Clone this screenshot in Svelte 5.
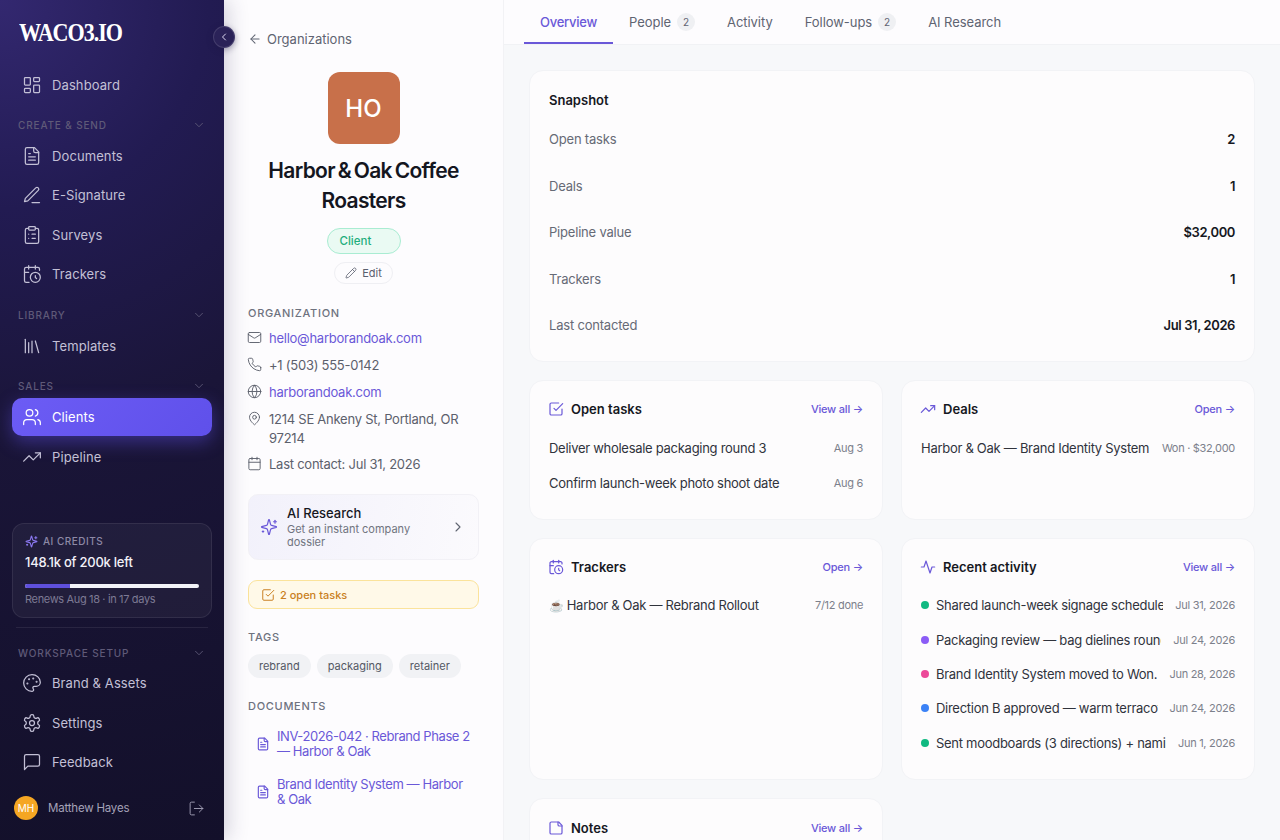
<script>
  const icons = {
    dashboard: '<rect width="7" height="9" x="3" y="3" rx="1"/><rect width="7" height="5" x="14" y="3" rx="1"/><rect width="7" height="9" x="14" y="12" rx="1"/><rect width="7" height="5" x="3" y="16" rx="1"/>',
    file: '<path d="M15 2H6a2 2 0 0 0-2 2v16a2 2 0 0 0 2 2h12a2 2 0 0 0 2-2V7Z"/><path d="M14 2v4a2 2 0 0 0 2 2h4"/><path d="M10 9H8"/><path d="M16 13H8"/><path d="M16 17H8"/>',
    pen: '<path d="M12 21h9"/><path d="M16.5 3.5a2.12 2.12 0 0 1 3 3L7 19l-4 1 1-4Z"/>',
    clipboard: '<rect width="8" height="4" x="8" y="2" rx="1"/><path d="M16 4h2a2 2 0 0 1 2 2v14a2 2 0 0 1-2 2H6a2 2 0 0 1-2-2V6a2 2 0 0 1 2-2h2"/><path d="M12 11h4"/><path d="M12 16h4"/><path d="M8 11h.01"/><path d="M8 16h.01"/>',
    calclock: '<path d="M21 7.5V6a2 2 0 0 0-2-2H5a2 2 0 0 0-2 2v14a2 2 0 0 0 2 2h3.5"/><path d="M16 2v4"/><path d="M8 2v4"/><path d="M3 10h5"/><path d="M17.5 17.5 16 16.3V14"/><circle cx="16" cy="16" r="6"/>',
    library: '<path d="m16 6 4 14"/><path d="M12 6v14"/><path d="M8 8v12"/><path d="M4 4v16"/>',
    users: '<path d="M16 21v-2a4 4 0 0 0-4-4H6a4 4 0 0 0-4 4v2"/><circle cx="9" cy="7" r="4"/><path d="M22 21v-2a4 4 0 0 0-3-3.87"/><path d="M16 3.13a4 4 0 0 1 0 7.75"/>',
    trending: '<polyline points="22 7 13.5 15.5 8.5 10.5 2 17"/><polyline points="16 7 22 7 22 13"/>',
    palette: '<path d="M12 22a1 1 0 0 1 0-20 10 9 0 0 1 10 9 5 5 0 0 1-5 5h-2.25a1.75 1.75 0 0 0-1.4 2.8l.3.4a1.75 1.75 0 0 1-1.4 2.8z"/><circle cx="13.5" cy="6.5" r=".5" fill="currentColor"/><circle cx="17.5" cy="10.5" r=".5" fill="currentColor"/><circle cx="6.5" cy="12.5" r=".5" fill="currentColor"/><circle cx="8.5" cy="7.5" r=".5" fill="currentColor"/>',
    settings: '<path d="M12.22 2h-.44a2 2 0 0 0-2 2v.18a2 2 0 0 1-1 1.73l-.43.25a2 2 0 0 1-2 0l-.15-.08a2 2 0 0 0-2.73.73l-.22.38a2 2 0 0 0 .73 2.73l.15.1a2 2 0 0 1 1 1.72v.51a2 2 0 0 1-1 1.74l-.15.09a2 2 0 0 0-.73 2.73l.22.38a2 2 0 0 0 2.73.73l.15-.08a2 2 0 0 1 2 0l.43.25a2 2 0 0 1 1 1.73V20a2 2 0 0 0 2 2h.44a2 2 0 0 0 2-2v-.18a2 2 0 0 1 1-1.73l.43-.25a2 2 0 0 1 2 0l.15.08a2 2 0 0 0 2.73-.73l.22-.39a2 2 0 0 0-.73-2.73l-.15-.08a2 2 0 0 1-1-1.74v-.5a2 2 0 0 1 1-1.74l.15-.09a2 2 0 0 0 .73-2.73l-.22-.38a2 2 0 0 0-2.73-.73l-.15.08a2 2 0 0 1-2 0l-.43-.25a2 2 0 0 1-1-1.73V4a2 2 0 0 0-2-2z"/><circle cx="12" cy="12" r="3"/>',
    message: '<path d="M21 15a2 2 0 0 1-2 2H7l-4 4V5a2 2 0 0 1 2-2h14a2 2 0 0 1 2 2z"/>',
    logout: '<path d="M9 21H5a2 2 0 0 1-2-2V5a2 2 0 0 1 2-2h4"/><polyline points="16 17 21 12 16 7"/><line x1="21" y1="12" x2="9" y2="12"/>',
    sparkles: '<path d="M9.937 15.5A2 2 0 0 0 8.5 14.063l-6.135-1.582a.5.5 0 0 1 0-.962L8.5 9.936A2 2 0 0 0 9.937 8.5l1.582-6.135a.5.5 0 0 1 .963 0L14.063 8.5A2 2 0 0 0 15.5 9.937l6.135 1.581a.5.5 0 0 1 0 .964L15.5 14.063a2 2 0 0 0-1.437 1.437l-1.582 6.135a.5.5 0 0 1-.963 0z"/><path d="M20 3v4"/><path d="M22 5h-4"/><path d="M4 17v2"/><path d="M5 18H3"/>',
    mail: '<rect width="20" height="16" x="2" y="4" rx="2"/><path d="m22 7-8.97 5.7a1.94 1.94 0 0 1-2.06 0L2 7"/>',
    phone: '<path d="M22 16.92v3a2 2 0 0 1-2.18 2 19.79 19.79 0 0 1-8.63-3.07 19.5 19.5 0 0 1-6-6 19.79 19.79 0 0 1-3.07-8.67A2 2 0 0 1 4.11 2h3a2 2 0 0 1 2 1.72 12.84 12.84 0 0 0 .7 2.81 2 2 0 0 1-.45 2.11L8.09 9.91a16 16 0 0 0 6 6l1.27-1.27a2 2 0 0 1 2.11-.45 12.84 12.84 0 0 0 2.81.7A2 2 0 0 1 22 16.92z"/>',
    globe: '<circle cx="12" cy="12" r="10"/><path d="M12 2a14.5 14.5 0 0 0 0 20 14.5 14.5 0 0 0 0-20"/><path d="M2 12h20"/>',
    pin: '<path d="M20 10c0 6-8 12-8 12s-8-6-8-12a8 8 0 0 1 16 0Z"/><circle cx="12" cy="10" r="3"/>',
    calendar: '<path d="M8 2v4"/><path d="M16 2v4"/><rect width="18" height="18" x="3" y="4" rx="2"/><path d="M3 10h18"/>',
    check: '<path d="m9 11 3 3L22 4"/><path d="M21 12v7a2 2 0 0 1-2 2H5a2 2 0 0 1-2-2V5a2 2 0 0 1 2-2h11"/>',
    pencil: '<path d="M21.174 6.812a1 1 0 0 0-3.986-3.987L3.842 16.174a2 2 0 0 0-.5.83l-1.321 4.352a.5.5 0 0 0 .623.622l4.353-1.32a2 2 0 0 0 .83-.497z"/><path d="m15 5 4 4"/>',
    activity: '<path d="M22 12h-4l-3 9L9 3l-3 9H2"/>',
    note: '<path d="M16 3H5a2 2 0 0 0-2 2v14a2 2 0 0 0 2 2h14a2 2 0 0 0 2-2V8Z"/><path d="M15 3v4a2 2 0 0 0 2 2h4"/>',
    chevdown: '<path d="m6 9 6 6 6-6"/>',
    chevleft: '<path d="m15 18-6-6 6-6"/>',
    chevright: '<path d="m9 18 6-6-6-6"/>',
    back: '<path d="m12 19-7-7 7-7"/><path d="M19 12H5"/>'
  };

  const groups = [
    { items: [{ i: 'dashboard', t: 'Dashboard' }] },
    { label: 'CREATE & SEND', items: [{ i: 'file', t: 'Documents' }, { i: 'pen', t: 'E-Signature' }, { i: 'clipboard', t: 'Surveys' }, { i: 'calclock', t: 'Trackers' }] },
    { label: 'LIBRARY', items: [{ i: 'library', t: 'Templates' }] },
    { label: 'SALES', items: [{ i: 'users', t: 'Clients', active: true }, { i: 'trending', t: 'Pipeline' }] }
  ];
  const setup = [{ i: 'palette', t: 'Brand & Assets' }, { i: 'settings', t: 'Settings' }, { i: 'message', t: 'Feedback' }];
  const contacts = [
    { i: 'mail', t: 'hello@harborandoak.com', link: true },
    { i: 'phone', t: '+1 (503) 555-0142' },
    { i: 'globe', t: 'harborandoak.com', link: true },
    { i: 'pin', t: '1214 SE Ankeny St, Portland, OR 97214' },
    { i: 'calendar', t: 'Last contact: Jul 31, 2026' }
  ];
  const tags = ['rebrand', 'packaging', 'retainer'];
  const docs = ['INV-2026-042 · Rebrand Phase 2 — Harbor & Oak', 'Brand Identity System — Harbor & Oak'];
  const tabs = [{ t: 'Overview', active: true }, { t: 'People', n: 2 }, { t: 'Activity' }, { t: 'Follow-ups', n: 2 }, { t: 'AI Research' }];
  const snapshot = [['Open tasks', '2'], ['Deals', '1'], ['Pipeline value', '$32,000'], ['Trackers', '1'], ['Last contacted', 'Jul 31, 2026']];
  const activity = [
    ['#10b981', 'Shared launch-week signage schedule with the team', 'Jul 31, 2026'],
    ['#8b5cf6', 'Packaging review — bag dielines round 2 sent over', 'Jul 24, 2026'],
    ['#ec4899', 'Brand Identity System moved to Won.', 'Jun 28, 2026'],
    ['#3b82f6', 'Direction B approved — warm terracotta palette', 'Jun 24, 2026'],
    ['#10b981', 'Sent moodboards (3 directions) + naming shortlist', 'Jun 1, 2026']
  ];
</script>

{#snippet icon(name, cls)}
  <svg class={cls} viewBox="0 0 24 24" fill="none" stroke="currentColor" stroke-linecap="round" stroke-linejoin="round">{@html icons[name]}</svg>
{/snippet}

{#snippet navItem(it)}
  <a class="nav-item" class:active={it.active} href="#top">
    {@render icon(it.i, 'nav-ic')}
    <span>{it.t}</span>
  </a>
{/snippet}

{#snippet cardHead(ic, title, action)}
  <div class="card-head">
    <h3>{@render icon(ic, 'head-ic')}{title}</h3>
    <a href="#top" class="action">{action} →</a>
  </div>
{/snippet}

<div class="app">
  <aside class="sidebar">
    <div class="logo"><span>WACO3.IO</span></div>
    <button class="collapse" aria-label="Collapse sidebar">{@render icon('chevleft', 'collapse-ic')}</button>
    <nav class="nav">
      {#each groups as g}
        <div class="group">
          {#if g.label}
            <div class="group-label"><span>{g.label}</span>{@render icon('chevdown', 'group-ic')}</div>
          {/if}
          {#each g.items as it}{@render navItem(it)}{/each}
        </div>
      {/each}
    </nav>
    <div class="credits">
      <div class="credits-label">{@render icon('sparkles', 'credits-ic')}AI CREDITS</div>
      <div class="credits-value">148.1k of 200k left</div>
      <div class="bar"><div class="bar-fill" style="width: 26%"></div></div>
      <div class="credits-note">Renews Aug 18 · in 17 days</div>
    </div>
    <div class="sep"></div>
    <div class="group setup">
      <div class="group-label"><span>WORKSPACE SETUP</span>{@render icon('chevdown', 'group-ic')}</div>
      {#each setup as it}{@render navItem(it)}{/each}
    </div>
    <div class="user">
      <div class="user-av">MH</div>
      <span class="user-name">Matthew Hayes</span>
      {@render icon('logout', 'logout-ic')}
    </div>
  </aside>

  <section class="org">
    <a class="back" href="#top">{@render icon('back', 'back-ic')}Organizations</a>
    <div class="org-top">
      <div class="org-av">HO</div>
      <h1>Harbor &amp; Oak Coffee Roasters</h1>
      <span class="chip">Client</span>
      <button class="edit">{@render icon('pencil', 'edit-ic')}Edit</button>
    </div>

    <h4 class="org-label first">ORGANIZATION</h4>
    <div class="contacts">
      {#each contacts as c}
        <div class="contact">
          {@render icon(c.i, 'contact-ic')}
          <span class:link={c.link}>{c.t}</span>
        </div>
      {/each}
    </div>

    <div class="research">
      {@render icon('sparkles', 'research-ic')}
      <div class="research-body">
        <strong>AI Research</strong>
        <span>Get an instant company dossier</span>
      </div>
      {@render icon('chevright', 'research-chev')}
    </div>

    <div class="tasks-pill">{@render icon('check', 'pill-ic')}2 open tasks</div>

    <h4 class="org-label">TAGS</h4>
    <div class="tags">
      {#each tags as t}<span class="tag">{t}</span>{/each}
    </div>

    <h4 class="org-label">DOCUMENTS</h4>
    <div class="docs">
      {#each docs as d}
        <a class="doc" href="#top">{@render icon('file', 'doc-ic')}<span>{d}</span></a>
      {/each}
    </div>
  </section>

  <main class="main">
    <div class="tabs">
      {#each tabs as tab}
        <div class="tab" class:active={tab.active}>
          {tab.t}
          {#if tab.n}<span class="badge">{tab.n}</span>{/if}
        </div>
      {/each}
    </div>
    <div class="content">
      <div class="card snapshot">
        <h3 class="snap-title">Snapshot</h3>
        {#each snapshot as row}
          <div class="snap-row"><span>{row[0]}</span><b>{row[1]}</b></div>
        {/each}
      </div>

      <div class="grid">
        <div class="col">
          <div class="card tasks-card">
            {@render cardHead('check', 'Open tasks', 'View all')}
            <div class="row"><span class="row-t">Deliver wholesale packaging round 3</span><span class="row-m">Aug 3</span></div>
            <div class="row"><span class="row-t">Confirm launch-week photo shoot date</span><span class="row-m">Aug 6</span></div>
          </div>
          <div class="card tall">
            {@render cardHead('calclock', 'Trackers', 'Open')}
            <div class="row"><span class="row-t"><span class="cup">☕</span>Harbor &amp; Oak — Rebrand Rollout</span><span class="row-m">7/12 done</span></div>
          </div>
          <div class="card notes">
            {@render cardHead('note', 'Notes', 'View all')}
          </div>
        </div>
        <div class="col">
          <div class="card tasks-card">
            {@render cardHead('trending', 'Deals', 'Open')}
            <div class="row"><span class="row-t">Harbor &amp; Oak — Brand Identity System</span><span class="row-m">Won · $32,000</span></div>
          </div>
          <div class="card tall">
            {@render cardHead('activity', 'Recent activity', 'View all')}
            {#each activity as a}
              <div class="row act">
                <span class="dot" style="background: {a[0]}"></span>
                <span class="act-t">{a[1]}</span>
                <span class="row-m">{a[2]}</span>
              </div>
            {/each}
          </div>
        </div>
      </div>
    </div>
  </main>
</div>

<style>
  :global(body) { margin: 0; font-family: Inter, "Noto Sans", sans-serif; background: #f7f8fa; }
  * { box-sizing: border-box; }
  a { text-decoration: none; color: inherit; }
  h1, h3, h4 { margin: 0; }
  svg { display: block; flex: none; }
  .app { display: flex; height: 840px; width: 1280px; overflow: hidden; }

  /* sidebar */
  .sidebar {
    position: relative; z-index: 2; width: 224px; flex: none; display: flex; flex-direction: column;
    padding: 0 12px; color: #c8c5da;
    background: radial-gradient(circle at 0 0, #332870 0, #221b52 24%, #1a1538 50%, #13102a 100%);
    box-shadow: 4px 0 20px rgba(40, 36, 80, .2);
  }
  .logo { height: 65.5px; padding: 18px 7px 0; font: 700 26px/30px "Liberation Serif", serif; color: #fff; letter-spacing: -1.2px; }
  .logo span { display: inline-block; transform: scaleX(.85); transform-origin: left center; }
  .collapse {
    position: absolute; left: 213px; top: 26px; width: 22px; height: 22px; padding: 0; border-radius: 50%;
    border: 1px solid rgba(255,255,255,.12); background: #2a2258; color: #ddd9f2; display: flex;
    align-items: center; justify-content: center; box-shadow: 0 2px 6px rgba(30,25,70,.4);
  }
  :global(.collapse-ic) { width: 12px; height: 12px; stroke-width: 2; }
  .nav { display: flex; flex-direction: column; }
  .group { display: flex; flex-direction: column; gap: 1.4px; padding-bottom: 10.5px; }
  .group-label {
    display: flex; align-items: center; justify-content: space-between; height: 20px; margin-top: 1px; margin-bottom: .6px;
    padding: 0 6px; font-size: 10px; font-weight: 500; letter-spacing: .85px; color: #5f5a78;
  }
  :global(.group-ic) { width: 14px; height: 14px; stroke-width: 1.5; color: #5f5a78; }
  .nav-item {
    display: flex; align-items: center; gap: 10px; height: 38px; padding: 0 10px; border-radius: 10px;
    font-size: 13px; font-weight: 400; color: #c3c0d6; letter-spacing: .1px;
  }
  .nav-item.active {
    color: #fff; background: linear-gradient(135deg, #6c5cf5, #5f50ea);
    box-shadow: 0 6px 18px rgba(96, 80, 230, .45);
  }
  :global(.nav-ic) { width: 20px; height: 20px; stroke-width: 1.5; }
  .credits {
    margin-top: 37px; height: 95px; padding: 10px 12px; border-radius: 12px;
    background: rgba(255,255,255,.045); border: 1px solid rgba(255,255,255,.08);
  }
  .credits-label { display: flex; align-items: center; gap: 5px; font-size: 10px; font-weight: 500; letter-spacing: .5px; color: #8d89a6; line-height: 14px; }
  :global(.credits-ic) { width: 13px; height: 13px; color: #8b78f0; stroke-width: 2; }
  .credits-value { margin-top: 5px; font-size: 13px; font-weight: 500; color: #f2f1f8; line-height: 18px; letter-spacing: -.25px; }
  .bar { height: 4px; background: #f3f3f8; border-radius: 2px; margin-top: 13px; overflow: hidden; }
  .bar-fill { height: 100%; background: #5f50dc; }
  .credits-note { margin-top: 3px; font-size: 11px; color: #7d7a94; line-height: 16px; letter-spacing: -.35px; }
  .sep { height: 1px; background: rgba(255,255,255,.08); margin: 9px 4px 0; flex: none; }
  .setup { margin-top: 14px; padding-bottom: 0; }
  .setup .group-label { margin-bottom: 0; }
  .user { display: flex; align-items: center; margin: 15px -10px 0 2px; padding-right: 17px; }
  .user-av {
    width: 24px; height: 24px; border-radius: 50%; background: #f5a623; color: #fff; font-size: 10px;
    display: flex; align-items: center; justify-content: center;
  }
  .user-name { flex: 1; margin-left: 10px; font-size: 11.5px; color: #a5a2b8; letter-spacing: -.2px; }
  :global(.logout-ic) { width: 17px; height: 17px; stroke-width: 1.3; color: #a5a2b8; }

  /* org */
  .org { width: 280px; flex: none; padding: 30px 24px 0; background: #fdfcfe; border-right: 1px solid #f2f2f5; }
  .back { display: flex; align-items: center; gap: 5px; font-size: 13px; line-height: 18px; color: #5f6472; }
  :global(.back-ic) { width: 14px; height: 14px; stroke-width: 1.8; }
  .org-top { display: flex; flex-direction: column; align-items: center; margin-top: 24px; }
  .org-av {
    width: 72px; height: 72px; border-radius: 12px; background: #c8704a; color: #fff; font-size: 24px;
    font-weight: 500; display: flex; align-items: center; justify-content: center;
  }
  h1 { margin-top: 12px; font-size: 21px; line-height: 30px; font-weight: 600; color: #14161f; text-align: center; letter-spacing: -.68px; word-spacing: -1.8px; }
  .chip {
    margin-top: 12px; width: 74px; height: 26px; padding: 0 12px; border-radius: 13px; font-size: 11.5px; font-weight: 500; line-height: 24px;
    color: #1fae7d; background: #eafaf3; border: 1px solid #a9ecd2;
  }
  .edit {
    margin-top: 8px; display: flex; align-items: center; gap: 5px; height: 22px; padding: 0 10.5px; border-radius: 11px;
    background: #fdfcfe; border: 1px solid #efeff3; font: 400 11px Inter, sans-serif; color: #5b606e;
  }
  :global(.edit-ic) { width: 12px; height: 12px; stroke-width: 1.6; }
  .org-label { font-size: 11px; font-weight: 500; letter-spacing: .7px; color: #6e727e; line-height: 16px; margin-top: 20px; }
  .org-label.first { margin-top: 21px; }
  .contacts { margin-top: 8px; display: flex; flex-direction: column; gap: 8px; }
  .contact { display: flex; gap: 7px; font-size: 13px; line-height: 19px; color: #5c606c; letter-spacing: -.25px; }
  .contact:last-child { margin-top: -.6px; }
  :global(.contact-ic) { width: 15px; height: 15px; stroke-width: 1.5; margin: 1px 0 0 -1px; }
  .link { color: #6a58d8; }
  .research {
    margin-top: 19.6px; height: 66px; display: flex; align-items: center; gap: 9px; padding: 0 12px 0 11px; border-radius: 10px;
    background: linear-gradient(100deg, #f2f1fb, #fbfafd); border: 1px solid #f2f1f6;
  }
  :global(.research-ic) { width: 18px; height: 18px; stroke-width: 1.6; color: #6a58d8; }
  .research-body { flex: 1; display: flex; flex-direction: column; }
  .research-body strong { font-size: 13px; line-height: 17px; margin-bottom: 1px; font-weight: 500; color: #16181f; }
  .research-body span { font-size: 11px; line-height: 13px; color: #70747f; }
  :global(.research-chev) { width: 16px; height: 16px; stroke-width: 1.6; color: #5f6470; }
  .tasks-pill {
    margin-top: 20px; height: 29px; display: flex; align-items: center; gap: 5px; padding: 0 12px; border-radius: 9px;
    background: #fff9e8; border: 1px solid #fbe39b; font-size: 11px; font-weight: 500; color: #c97f22;
  }
  :global(.pill-ic) { width: 14px; height: 14px; stroke-width: 1.7; }
  .tags { display: flex; gap: 6px; margin-top: 9px; }
  .tag { height: 24px; padding: 0 11px; border-radius: 12px; background: #f1f2f5; font-size: 11px; line-height: 24px; color: #545864; }
  .tags + .org-label { margin-top: 20px; }
  .docs { margin-top: 15px; display: flex; flex-direction: column; gap: 18px; }
  .doc { display: flex; align-items: center; gap: 7px; padding: 0 6.5px 0 8px; font-size: 13px; line-height: 15px; color: #6a58d8; letter-spacing: -.42px; }
  :global(.doc-ic) { width: 14px; height: 14px; stroke-width: 2; }

  /* main */
  .main { flex: 1; min-width: 0; background: #f7f8fa; }
  .tabs { display: flex; height: 45px; padding-left: 20px; background: #fdfcfe; border-bottom: 1px solid #f1f2f5; }
  .tab { display: flex; align-items: center; gap: 6px; height: 44px; padding: 2px 16px 0; font-size: 13px; color: #5f6472; border-bottom: 2px solid transparent; letter-spacing: -.05px; }
  .tab.active { color: #6a58d8; font-weight: 500; border-bottom-color: #6a58d8; letter-spacing: -.25px; }
  .badge { width: 18px; height: 18px; border-radius: 50%; background: #eff0f3; font-size: 10px; color: #5f6472; display: flex; align-items: center; justify-content: center; }
  .content { padding: 25px; display: flex; flex-direction: column; gap: 18px; }
  .card { background: #fdfcfd; border: 1px solid #f2f3f6; border-radius: 14px; padding: 19px; }
  .snapshot { height: 292px; padding-top: 20px; }
  .snap-title { font-size: 13px; font-weight: 600; color: #16181f; line-height: 18px; margin-bottom: 6.8px; }
  .snap-row { display: flex; justify-content: space-between; align-items: center; height: 46.5px; font-size: 13px; color: #666a76; letter-spacing: -.2px; }
  .snap-row b { font-weight: 600; color: #16181f; letter-spacing: -.4px; }
  .grid { display: grid; grid-template-columns: 1fr 1fr; gap: 18px; }
  .col { display: flex; flex-direction: column; gap: 18px; min-width: 0; }
  .tasks-card { height: 140px; }
  .tall { height: 242px; }
  .notes { height: 100px; padding-top: 20px; }
  .card-head { display: flex; justify-content: space-between; align-items: center; height: 18px; margin-bottom: 13px; }
  .tall .card-head { margin-bottom: 12px; }
  .card-head h3 { display: flex; align-items: center; gap: 7px; font-size: 13px; font-weight: 600; color: #16181f; }
  :global(.head-ic) { width: 16px; height: 16px; stroke-width: 1.8; color: #6a58d8; margin-left: -1px; }
  .action { font-size: 11px; font-weight: 500; color: #6a58d8; letter-spacing: -.2px; }
  .row { display: flex; align-items: center; justify-content: space-between; height: 34.4px; gap: 12px; font-size: 13px; color: #30333c; letter-spacing: -.28px; }
  .row-t { white-space: nowrap; }
  .row-m { flex: none; font-size: 11px; color: #7c808b; letter-spacing: -.3px; }
  .cup { margin-right: 3px; font-size: 12px; }
  .act { gap: 0; }
  .dot { width: 8px; height: 8px; border-radius: 50%; flex: none; margin-right: 7px; }
  .act-t { flex: 1; min-width: 0; overflow: hidden; white-space: nowrap; margin-right: 12px; }
</style>
